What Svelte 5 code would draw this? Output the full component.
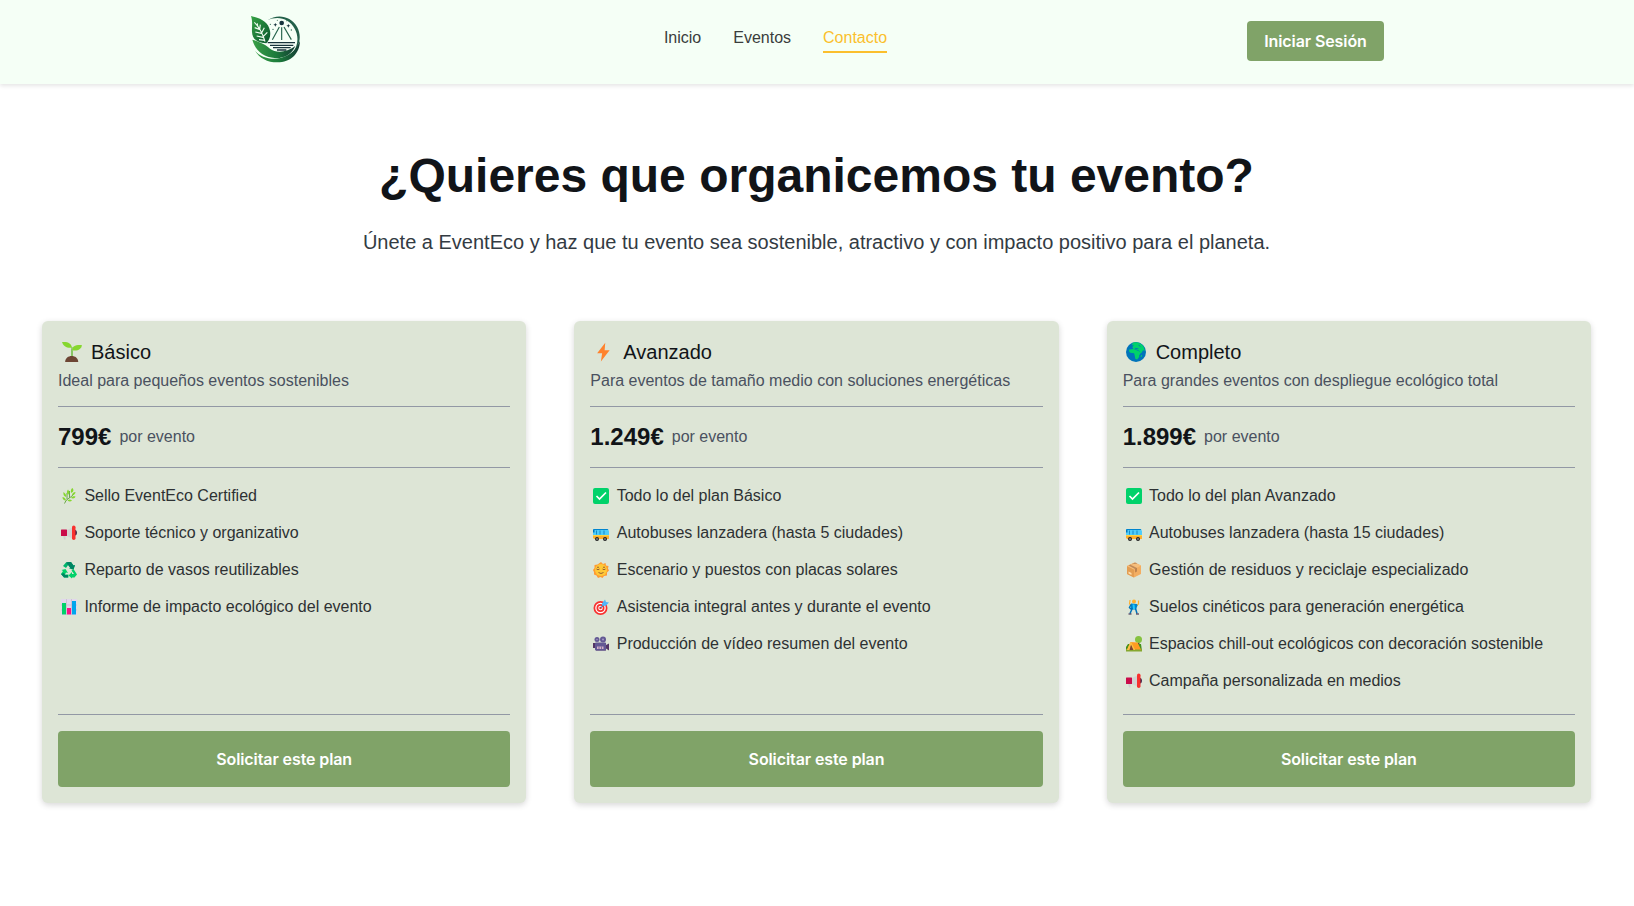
<script>
  const icons = {
    seedling: '<path d="M15 9V24h2V15z" fill="#5fa845"/><path d="M0 0c9-1 15 2 16 9C8 10 2 7 0 0z" fill="#86d72f"/><path d="M16 13c0-6 6-9 16-8-1 6-7 10-16 8z" fill="#86d72f"/><path d="M15 8h2v15h-2z" fill="#86c957"/><path d="M5 32c0-13 21-13 21 0z" fill="#6d4534"/>',
    bolt: '<path d="M18 1 5 18h8L11 31 25 13h-8z" fill="#ff822d"/>',
    globe: '<circle cx="16" cy="16" r="16" fill="#0074ba"/><path d="M11 1c7-2 15 1 18 8l1 5-3-1-2 4-4-3-4-2-5-1-2-3 2-2-3-1z" fill="#00d26a"/><path d="M5 12l7-1 5 2 5 2 3 1-4 5v3l-3 4-3-1-1-5-1-4-6-1-2-2z" fill="#00d26a"/><path d="M7 8l5-3M14 10l6 1M20 5l3 2" stroke="#0074ba" stroke-width="1.4"/><path d="M25 21l-1 3" stroke="#00d26a" stroke-width="1.6"/>',
    herb: '<path d="M7 31C10 21 17 22 26 12M12 22V10M17 19V6" stroke="#44911b" stroke-width="1.5" fill="none"/><path d="M23 0c4 5 1 8-3 10-1-5 0-8 3-10zM14 3c4 5 3 8 0 11-3-4-3-7 0-11zM5 8c4 3 6 6 5 10-4-1-6-5-5-10zM29 8c0 4-3 6-7 7 0-4 3-7 7-7zM29 17c-1 4-5 5-9 3 2-3 5-4 9-3zM22 25c-3 3-6 2-9 0 3-3 6-3 9 0zM3 18c5 1 7 4 7 7-5 0-7-3-7-7z" fill="#86d72f"/>',
    megaphone: '<path d="M4 20h5v9H6z" fill="#cfcfcf"/><path d="m12 10 11-5v22l-11-5z" fill="#d3d3d3"/><rect y="9" width="12" height="13" rx="1" fill="#ca0b4a"/><path d="M28 10c5 0 5 11 0 11z" fill="#321b41"/><rect x="22" y="1" width="7" height="29" rx="3.5" fill="#f8312f"/>',
    recycle: '<path d="m10 1 5-1h5l5 7 3-1-3 9-9-2 3-2-4-6-5 7-6-4z" fill="#00b56c"/><path d="m10 1 5-1h5l5 7 3-1-3 9-5-1z" fill="#008463"/><path d="m1 16 8-2 5 8-4-1-2 4h7v6H6l-6-7 4-6z" fill="#00d26a"/><path d="m25 14 7 11-5 6h-5v2l-7-6 7-7v4h4l-5-7z" fill="#00d26a"/><path d="m0 24 6 7h8v-5H8l-2-4z" fill="#008463"/>',
    chart: '<path d="M0 0h32v32H0z" fill="#e1d8ec"/><path d="M0 12h32M0 22h32M11 0v32M21 0v32" stroke="#c4bccc" stroke-width="1.5"/><rect x="2" y="8" width="8" height="23" fill="#00d26a"/><rect x="12" y="18" width="8" height="13" fill="#fc1285"/><rect x="22" y="4" width="8" height="27" fill="#00a6ed"/>',
    check: '<rect width="32" height="32" rx="4" fill="#00d26a"/><path d="m7 16 6 6L26 9" stroke="#fff" stroke-width="3.4" fill="none"/>',
    bus: '<path d="M1 8h28l3 4v9H0v-9z" fill="#4fcdfb"/><path d="M1 8h28l2 2H0z" fill="#0084ce"/><path d="M0 20h32v8H2l-2-3z" fill="#ffb02e"/><path d="M0 20h32v2H0z" fill="#fcd53f"/><path d="M7 11v8M14 11v8M22 11v8" stroke="#0074ba" stroke-width="1.5"/><path d="M0 10h3v5H0z" fill="#0074ba"/><circle cx="8" cy="28" r="4" fill="#212121"/><circle cx="24" cy="28" r="4" fill="#212121"/><circle cx="8" cy="28" r="1.5" fill="#ccc"/><circle cx="24" cy="28" r="1.5" fill="#ccc"/>',
    sun: '<path d="m16 0 4 4 5-2 1 5 5 1-1 5 2 4-4 4v6l-6 1-3 4-4-2-5 2-3-5-5-2v-5l-2-4 3-4V6l6-1z" fill="#ff9b32"/><circle cx="16" cy="16" r="12" fill="#ffc937"/><path d="M8 11q2-2 4 0M20 11q2-2 4 0M7 14q3 3 6 0M19 14q3 3 6 0M11 21q5 4 10 0" fill="none" stroke="#7d4533" stroke-width="1.6"/>',
    target: '<circle cx="15" cy="18" r="14" fill="#f8312f"/><circle cx="15" cy="18" r="10.5" fill="#fff"/><circle cx="15" cy="18" r="8" fill="#f8312f"/><circle cx="15" cy="18" r="4.5" fill="#fff"/><circle cx="15" cy="18" r="2.5" fill="#f8312f"/><path d="m15 18 10-10" stroke="#0074ba" stroke-width="2"/><path d="m18 9 6-8 2 5 6 1-7 7-7-1z" fill="#50b5fa"/>',
    camera: '<circle cx="8" cy="7" r="5" fill="#635994"/><circle cx="20" cy="7" r="6" fill="#635994"/><circle cx="8" cy="7" r="1.5" fill="#a89cc8"/><circle cx="20" cy="7" r="2" fill="#a89cc8"/><path d="M0 14h26v4l6-3v14l-6-4v4H6v-5H0z" fill="#533566"/><rect x="4" y="13" width="22" height="16" rx="2" fill="#635994"/><path d="M8 21h13v5H8z" fill="#d5b1c7"/><path d="M12 21v6M17 21v6" stroke="#635994" stroke-width="1.5"/>',
    package: '<path d="m2 8 15-7 13 6v17l-14 7L2 24z" fill="#f3ad61"/><path d="m2 8 14 7v16L2 24z" fill="#e39d52"/><path d="m2 8 15-7 13 6-14 8z" fill="#f7be7b"/><path d="m8 5 14 7v7l-4 2v-7L5 7l14-6 4 2z" fill="#9b6841" fill-opacity=".6"/><path d="m5 19 6 3v4l-6-3z" fill="#ffdca7"/>',
    dancer: '<circle cx="16" cy="5" r="4" fill="#ffb02e"/><path d="m8 2-1 8 5 3M25 3v7l-5 4" stroke="#ffb02e" stroke-width="2.4" fill="none"/><path d="m10 9 12 1 1 3-3 8H10z" fill="#0084ce"/><path d="m10 11-3 6 4 4M19 19l3 10M13 18 8 29" stroke="#0074ba" stroke-width="3" fill="none"/><path d="m15 11 1 9" stroke="#26c9fc" stroke-width="4"/><path d="M5 30h6M20 30h6" stroke="#321b41" stroke-width="2.4"/>',
    camping: '<path d="M24 10h3v15h-3z" fill="#6d4534"/><circle cx="25" cy="7" r="7" fill="#86c240"/><path d="M0 22 4 16h26l2 14H0z" fill="#44911b"/><path d="M0 26h32v5H0z" fill="#86a72f"/><path d="m9 12 14 1 7 14H2z" fill="#ff9b22"/><path d="m9 12 9 16H2z" fill="#ffc24b"/><path d="m10 17 5 11H7z" fill="#7d4533"/><path d="m4 28 6-15 7 15" stroke="#fcc03f" stroke-width="2" fill="none"/>'
  };

  const links = [
    { label: 'Inicio' },
    { label: 'Eventos' },
    { label: 'Contacto', active: true }
  ];

  const plans = [
    {
      icon: 'seedling', name: 'Básico', price: '799€',
      description: 'Ideal para pequeños eventos sostenibles',
      features: [
        ['herb', 'Sello EventEco Certified'],
        ['megaphone', 'Soporte técnico y organizativo'],
        ['recycle', 'Reparto de vasos reutilizables'],
        ['chart', 'Informe de impacto ecológico del evento']
      ]
    },
    {
      icon: 'bolt', name: 'Avanzado', price: '1.249€',
      description: 'Para eventos de tamaño medio con soluciones energéticas',
      features: [
        ['check', 'Todo lo del plan Básico'],
        ['bus', 'Autobuses lanzadera (hasta 5 ciudades)'],
        ['sun', 'Escenario y puestos con placas solares'],
        ['target', 'Asistencia integral antes y durante el evento'],
        ['camera', 'Producción de vídeo resumen del evento']
      ]
    },
    {
      icon: 'globe', name: 'Completo', price: '1.899€',
      description: 'Para grandes eventos con despliegue ecológico total',
      features: [
        ['check', 'Todo lo del plan Avanzado'],
        ['bus', 'Autobuses lanzadera (hasta 15 ciudades)'],
        ['package', 'Gestión de residuos y reciclaje especializado'],
        ['dancer', 'Suelos cinéticos para generación energética'],
        ['camping', 'Espacios chill-out ecológicos con decoración sostenible'],
        ['megaphone', 'Campaña personalizada en medios']
      ]
    }
  ];
</script>

{#snippet icon(name)}
  <svg class="icon" viewBox="0 0 32 32" aria-hidden="true">{@html icons[name]}</svg>
{/snippet}

<header>
  <a class="logo" href="#inicio" aria-label="EventEco">
    <svg viewBox="30 30 156 144">
      <defs>
        <linearGradient id="leaf" x1="0" y1="0" x2="1" y2="1">
          <stop offset="0" stop-color="#35a345" /><stop offset="1" stop-color="#08552c" />
        </linearGradient>
        <linearGradient id="swoosh" x1="0" y1="0" x2="1" y2="0">
          <stop offset="0" stop-color="#3aa047" /><stop offset=".55" stop-color="#1b7a3b" /><stop offset="1" stop-color="#153c35" />
        </linearGradient>
      </defs>
      <path d="M82 46C112 25 152 33 171 65c15 27 9 59-14 82 18-26 20-53 7-76C148 41 114 31 82 46z" fill="#23604a" />
      <path d="M37 104c22 6 42 16 53 27 18 14 50 12 76-8-12 27-36 38-62 36-34-2-58-22-67-55z" fill="url(#swoosh)" />
      <path d="M45 137c20 24 62 32 95 15 18-9 30-22 40-44-1 38-28 64-68 64-30 0-54-13-67-35z" fill="url(#swoosh)" />
      <path d="M83 113h82M90 121h70M99 128h53M111 135h28" stroke="#18333b" stroke-width="4" />
      <path d="M33 33c31 7 52 18 57 44 3 17-2 29-11 38-28-1-42-13-43-34-1-17 3-29-3-48z" fill="url(#leaf)" />
      <path d="M43 52c17 16 25 34 32 58M53 64l-1-9M59 73l2-14M65 83l8-15M70 94l12-12M58 73l-14-5M64 85l-18-4M69 97l-19-4M74 106l-17-2" fill="none" stroke="#effcf0" stroke-width="3.5" />
      <circle cx="125" cy="54" r="7" fill="#17343e" />
      <path d="M118 66 97 104M125 67v38M132 66l22 38" fill="none" stroke="#26644c" stroke-width="3.5" />
      <path d="m106 54 2 4 4 1-4 2-2 4-2-4-4-2 4-1zM145 57l2 4 4 1-4 2-2 4-2-4-4-2 4-1z" fill="#17343e" />
      <g fill="#26644c"><circle cx="91" cy="58" r="1.8" /><circle cx="99" cy="73" r="2" /><circle cx="154" cy="75" r="2" /><circle cx="112" cy="46" r="1.5" /><circle cx="140" cy="47" r="1.5" /></g>
    </svg>
  </a>
  <nav>
    {#each links as link}
      <a href="#{link.label.toLowerCase()}" class:active={link.active}>{link.label}</a>
    {/each}
  </nav>
  <button class="login">Iniciar Sesión</button>
</header>

<main>
  <h1>¿Quieres que organicemos tu evento?</h1>
  <p class="lead">Únete a EventEco y haz que tu evento sea sostenible, atractivo y con impacto positivo para el planeta.</p>

  <section class="plans">
    {#each plans as plan}
      <article>
        <div class="intro">
          <h2>{@render icon(plan.icon)}<span>{plan.name}</span></h2>
          <p>{plan.description}</p>
        </div>
        <div class="price"><strong>{plan.price}</strong><span>por evento</span></div>
        <ul>
          {#each plan.features as [glyph, text]}
            <li>{@render icon(glyph)}<span>{text}</span></li>
          {/each}
        </ul>
        <div class="action"><button>Solicitar este plan</button></div>
      </article>
    {/each}
  </section>
</main>

<style>
  :global(body) {
    background: #fff;
    color: #111418;
    font-family: "Liberation Sans", Arial, sans-serif;
    font-size: 16px;
  }

  header {
    box-sizing: border-box;
    height: 84px;
    padding: 0 250px;
    display: flex;
    justify-content: space-between;
    align-items: flex-start;
    background: #f5fff6;
    box-shadow: 0 2px 4px rgba(0, 0, 0, 0.1);
  }

  .logo {
    width: 54px;
    margin-top: 15px;
  }

  .logo svg {
    display: block;
    width: 52px;
    height: 48px;
  }

  nav {
    display: flex;
    gap: 32px;
    margin-top: 26px;
  }

  nav a {
    color: #3a3d3c;
    line-height: 24px;
    padding-bottom: 1px;
    border-bottom: 2px solid transparent;
    text-decoration: none;
  }

  nav a.active {
    color: #fbbf2d;
    border-color: #fbbf2d;
  }

  button {
    border: 0;
    border-radius: 4px;
    background: #80a368;
    color: #fff;
    font: 600 16px/24px Inter, sans-serif;
    letter-spacing: -0.1px;
  }

  .login {
    width: 137px;
    height: 40px;
    padding: 0;
    margin-top: 21px;
  }

  main {
    box-sizing: border-box;
    min-height: calc(100vh - 84px);
    padding: 62px 43px 0 42px;
  }

  h1 {
    margin: 0;
    font-size: 48px;
    line-height: 60px;
    text-align: center;
  }

  .lead {
    margin: 21px 0 63px;
    color: #333b43;
    font-size: 20px;
    line-height: 31px;
    text-align: center;
  }

  .plans {
    display: grid;
    grid-template-columns: repeat(3, 1fr);
    gap: 48px;
  }

  article {
    box-sizing: border-box;
    height: 482px;
    padding: 16px;
    display: flex;
    flex-direction: column;
    border-radius: 6px;
    background: #dde5d6;
    box-shadow: 0 2px 6px rgba(0, 0, 0, 0.16);
  }

  .icon {
    flex: none;
    display: block;
    overflow: visible;
  }

  .intro {
    height: 69px;
    border-bottom: 1px solid #9298a5;
  }

  h2 {
    display: flex;
    align-items: center;
    margin: 0;
    font-size: 20px;
    font-weight: 400;
    line-height: 30px;
  }

  h2 .icon {
    width: 20px;
    height: 20px;
    margin: 0 9.5px 0 3.5px;
  }

  .intro p {
    margin: 2px 0 0;
    color: #4a5160;
    line-height: 24px;
  }

  .price {
    height: 60px;
    display: flex;
    align-items: center;
    gap: 8px;
    border-bottom: 1px solid #9298a5;
  }

  .price strong {
    font-size: 24px;
  }

  .price span {
    color: #4a5160;
  }

  ul {
    flex: 1;
    margin: 0;
    padding: 16px 0 0;
    list-style: none;
  }

  li {
    display: flex;
    align-items: center;
    height: 24px;
    margin-bottom: 13px;
    color: #2d3133;
  }

  li .icon {
    width: 16px;
    height: 16px;
    margin: 0 7.4px 0 3px;
  }

  .action {
    border-top: 1px solid #9298a5;
    padding-top: 16px;
  }

  .action button {
    display: block;
    width: 100%;
    height: 56px;
  }
</style>
